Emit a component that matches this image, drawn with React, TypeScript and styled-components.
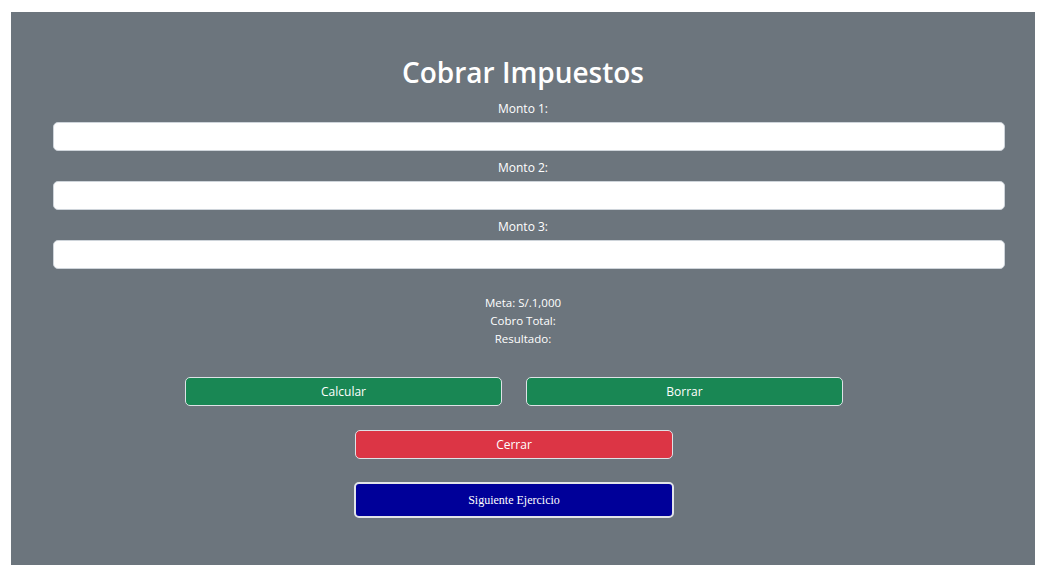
import React from "react";
import styled, { createGlobalStyle } from "styled-components";

const Global = createGlobalStyle`
  html, body { margin: 0; padding: 0; background: #ffffff; }
  body { padding: 12px 10px 10px 11px; font-family: "Open Sans", "Noto Sans", sans-serif; }
  * { box-sizing: border-box; }
`;

const Panel = styled.div`
  background: #6c757d;
  height: 553px;
  padding: 39px 42px 0 42px;
  display: flex;
  flex-direction: column;
  align-items: stretch;
  color: #ffffff;
`;

const Title = styled.h1`
  margin: 0 0 5px 0;
  text-align: center;
  font-size: 28px;
  font-weight: 600;
  line-height: 42px;
`;

const Field = styled.div`
  display: flex;
  flex-direction: column;
  align-items: center;
  margin-bottom: 6px;
`;

const Label = styled.label`
  font-size: 12px;
  line-height: 21px;
  margin-bottom: 3px;
`;

const Input = styled.input`
  align-self: flex-start;
  width: 952px;
  height: 29px;
  border: 1px solid #ced4da;
  border-radius: 5px;
  background: #ffffff;
  outline: none;
`;

const Summary = styled.div`
  margin-top: 19px;
  display: flex;
  flex-direction: column;
  align-items: center;
  font-size: 11.5px;
  line-height: 18px;
`;

const ButtonRow = styled.div<{ $mt: number }>`
  display: flex;
  justify-content: center;
  gap: 24px;
  margin-top: ${(p) => p.$mt}px;
  padding-right: 18px;
`;

const Btn = styled.button<{ $bg: string; $w?: number }>`
  width: ${(p) => p.$w ?? 317}px;
  height: 29px;
  background: ${(p) => p.$bg};
  color: #ffffff;
  border: 1px solid #dee2e6;
  border-radius: 5px;
  font-family: "Open Sans", "Noto Sans", sans-serif;
  font-size: 12px;
  padding: 0;
`;

const NextBtn = styled.button`
  width: 320px;
  height: 36px;
  background: #000099;
  color: #ffffff;
  border: 2px solid #e2e4e8;
  border-radius: 5px;
  font-family: "Liberation Serif", "Times New Roman", serif;
  font-size: 12px;
  padding: 0;
`;

export default function App() {
  return (
    <>
      <Global />
      <Panel>
        <Title>Cobrar Impuestos</Title>
        {["Monto 1:", "Monto 2:", "Monto 3:"].map((l) => (
          <Field key={l}>
            <Label>{l}</Label>
            <Input type="text" />
          </Field>
        ))}
        <Summary>
          <div>Meta: S/.1,000</div>
          <div>Cobro Total:</div>
          <div>Resultado:</div>
        </Summary>
        <ButtonRow $mt={29}>
          <Btn $bg="#198754">Calcular</Btn>
          <Btn $bg="#198754">Borrar</Btn>
        </ButtonRow>
        <ButtonRow $mt={24}>
          <Btn $bg="#dc3545" $w={318}>Cerrar</Btn>
        </ButtonRow>
        <ButtonRow $mt={23}>
          <NextBtn>Siguiente Ejercicio</NextBtn>
        </ButtonRow>
      </Panel>
    </>
  );
}
